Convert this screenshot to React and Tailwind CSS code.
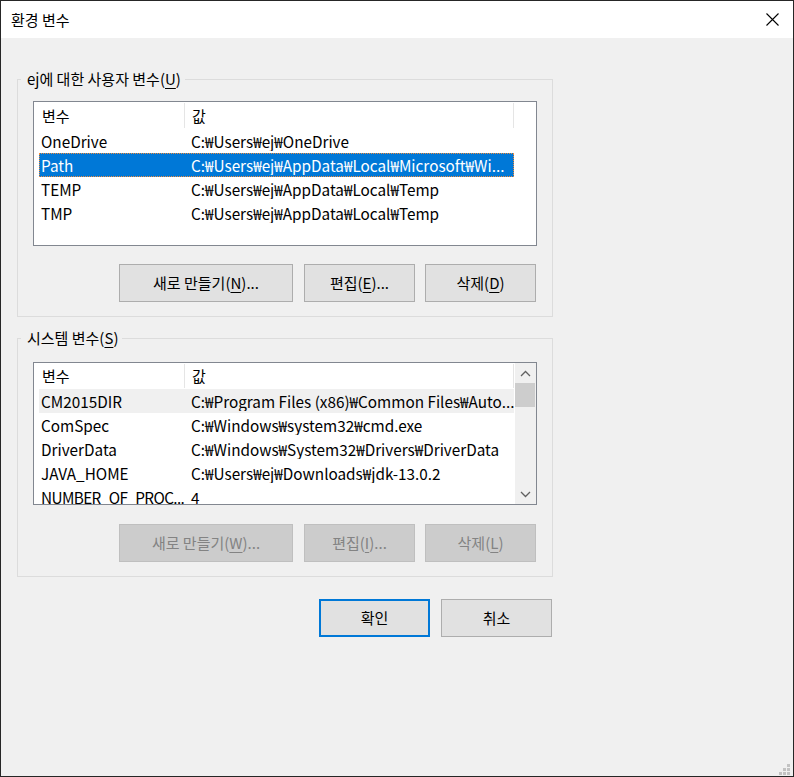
import React from "react";

const FONT = { fontFamily: '"Noto Sans CJK KR", "Noto Sans", sans-serif' };

function U({ children }) {
  return <span className="underline underline-offset-[3px] decoration-1">{children}</span>;
}

function Btn({ w, children, disabled, primary }) {
  let cls = "h-[38px] flex items-center justify-center text-[15px] ";
  if (disabled) cls += "bg-[#cccccc] border border-[#bfbfbf] text-[#838383]";
  else if (primary) cls += "bg-[#e1e1e1] border-2 border-[#0078d7] text-black";
  else cls += "bg-[#e1e1e1] border border-[#adadad] text-black";
  return <div className={cls} style={{ width: w }}>{children}</div>;
}

function Row({ name, value, state, tight }) {
  let cls = "ml-[5px] w-[475px] h-[24px] shrink-0 flex items-center whitespace-nowrap overflow-hidden text-[15.3px] ";
  if (state === "sel") cls += "bg-[#0078d7] text-white outline-1 outline-dotted outline-[#f08c3c] -outline-offset-1";
  else if (state === "hover") cls += "bg-[#f0f0f0] text-black";
  else cls += "text-black";
  return (
    <div className={cls}>
      <div className={"w-[146px] shrink-0 pl-[2px] overflow-hidden " + (tight ? "tracking-[-0.6px]" : "")}>{name}</div>
      <div className="w-[329px] shrink-0 pl-[6px] overflow-hidden">{value}</div>
    </div>
  );
}

function Header({ h }) {
  return (
    <div className={"flex shrink-0 " + h}>
      <div className="w-[151px] shrink-0 pl-[8px] flex items-center border-r border-[#e5e5e5] my-[1px]">변수</div>
      <div className="w-[329px] shrink-0 pl-[7px] flex items-center border-r border-[#e5e5e5] my-[1px]">값</div>
    </div>
  );
}

function Chevron({ up }) {
  return (
    <svg width="11" height="7" viewBox="0 0 11 7" className="block">
      <path
        d={up ? "M1 6 L5.5 1.5 L10 6" : "M1 1 L5.5 5.5 L10 1"}
        fill="none"
        stroke="#606060"
        strokeWidth="1.3"
      />
    </svg>
  );
}

export default function App() {
  const userRows = [
    ["OneDrive", "C:₩Users₩ej₩OneDrive"],
    ["Path", "C:₩Users₩ej₩AppData₩Local₩Microsoft₩Wi..."],
    ["TEMP", "C:₩Users₩ej₩AppData₩Local₩Temp"],
    ["TMP", "C:₩Users₩ej₩AppData₩Local₩Temp"],
  ];
  const sysRows = [
    ["CM2015DIR", "C:₩Program Files (x86)₩Common Files₩Auto..."],
    ["ComSpec", "C:₩Windows₩system32₩cmd.exe"],
    ["DriverData", "C:₩Windows₩System32₩Drivers₩DriverData"],
    ["JAVA_HOME", "C:₩Users₩ej₩Downloads₩jdk-13.0.2"],
    ["NUMBER_OF_PROC...", "4"],
  ];

  return (
    <div
      className="relative w-[794px] h-[777px] border border-[#262626] bg-[#f0f0f0] flex flex-col text-[15px] text-black leading-[20px]"
      style={FONT}
    >
      {/* Title bar */}
      <div className="h-[37px] bg-white flex items-center justify-between shrink-0">
        <div className="pl-[10px]">환경 변수</div>
        <svg width="13" height="13" viewBox="0 0 13 13" className="mr-[14px]">
          <path d="M0.5 0.5 L12.5 12.5 M12.5 0.5 L0.5 12.5" stroke="#000" strokeWidth="1.1" />
        </svg>
      </div>

      <div className="pl-[16px] flex flex-col">
        {/* User variables group */}
        <div className="relative mt-[41px] w-[536px] h-[238px] border border-[#dcdcdc] flex flex-col">
          <div className="absolute left-[3px] -top-[11px] px-[6px] pr-[4px] bg-[#f0f0f0]">
            ej에 대한 사용자 변수(<U>U</U>)
          </div>
          <div className="mt-[21px] ml-[15px] w-[504px] h-[145px] border border-[#828790] bg-white flex flex-col overflow-hidden">
            <Header h="h-[27px]" />
            {userRows.map((r, i) => (
              <Row key={r[0]} name={r[0]} value={r[1]} state={i === 1 ? "sel" : ""} />
            ))}
          </div>
          <div className="mt-[18px] flex ml-[101px]">
            <Btn w={174}>새로 만들기(<U>N</U>)...</Btn>
            <div className="ml-[11px]"><Btn w={111}>편집(<U>E</U>)...</Btn></div>
            <div className="ml-[10px]"><Btn w={111}>삭제(<U>D</U>)</Btn></div>
          </div>
        </div>

        {/* System variables group */}
        <div className="relative mt-[21px] w-[536px] h-[239px] border border-[#dcdcdc] flex flex-col">
          <div className="absolute left-[3px] -top-[11px] px-[6px] pr-[4px] bg-[#f0f0f0]">
            시스템 변수(<U>S</U>)
          </div>
          <div className="mt-[23px] ml-[15px] w-[504px] h-[143px] border border-[#828790] bg-white flex overflow-hidden">
            <div className="flex-1 flex flex-col overflow-hidden">
              <Header h="h-[26px]" />
              {sysRows.map((r, i) => (
                <Row key={r[0]} name={r[0]} value={r[1]} state={i === 0 ? "hover" : ""} tight={i === 4} />
              ))}
            </div>
            <div className="w-[21px] shrink-0 bg-[#f0f0f0] flex flex-col">
              <div className="h-[20px] shrink-0 flex items-center justify-center"><Chevron up /></div>
              <div className="h-[24px] shrink-0 bg-[#cdcdcd] mr-[1px]" />
              <div className="flex-1" />
              <div className="h-[20px] shrink-0 flex items-center justify-center"><Chevron /></div>
            </div>
          </div>
          <div className="mt-[19px] flex ml-[101px]">
            <Btn w={174} disabled>새로 만들기(<U>W</U>)...</Btn>
            <div className="ml-[11px]"><Btn w={111} disabled>편집(<U>I</U>)...</Btn></div>
            <div className="ml-[10px]"><Btn w={111} disabled>삭제(<U>L</U>)</Btn></div>
          </div>
        </div>

        {/* OK / Cancel */}
        <div className="mt-[22px] w-[536px] flex justify-end pr-[1px]">
          <Btn w={111} primary>확인</Btn>
          <div className="ml-[11px]"><Btn w={111}>취소</Btn></div>
        </div>
      </div>

      {/* Resize grip */}
      <svg width="11" height="11" viewBox="0 0 11 11" className="absolute right-[3px] bottom-[1px]">
        <rect x="8" y="0" width="3" height="3" fill="#c2c2c2" />
        <rect x="4" y="4" width="3" height="3" fill="#c2c2c2" />
        <rect x="8" y="4" width="3" height="3" fill="#c2c2c2" />
        <rect x="0" y="8" width="3" height="3" fill="#c2c2c2" />
        <rect x="4" y="8" width="3" height="3" fill="#c2c2c2" />
        <rect x="8" y="8" width="3" height="3" fill="#c2c2c2" />
      </svg>
    </div>
  );
}
